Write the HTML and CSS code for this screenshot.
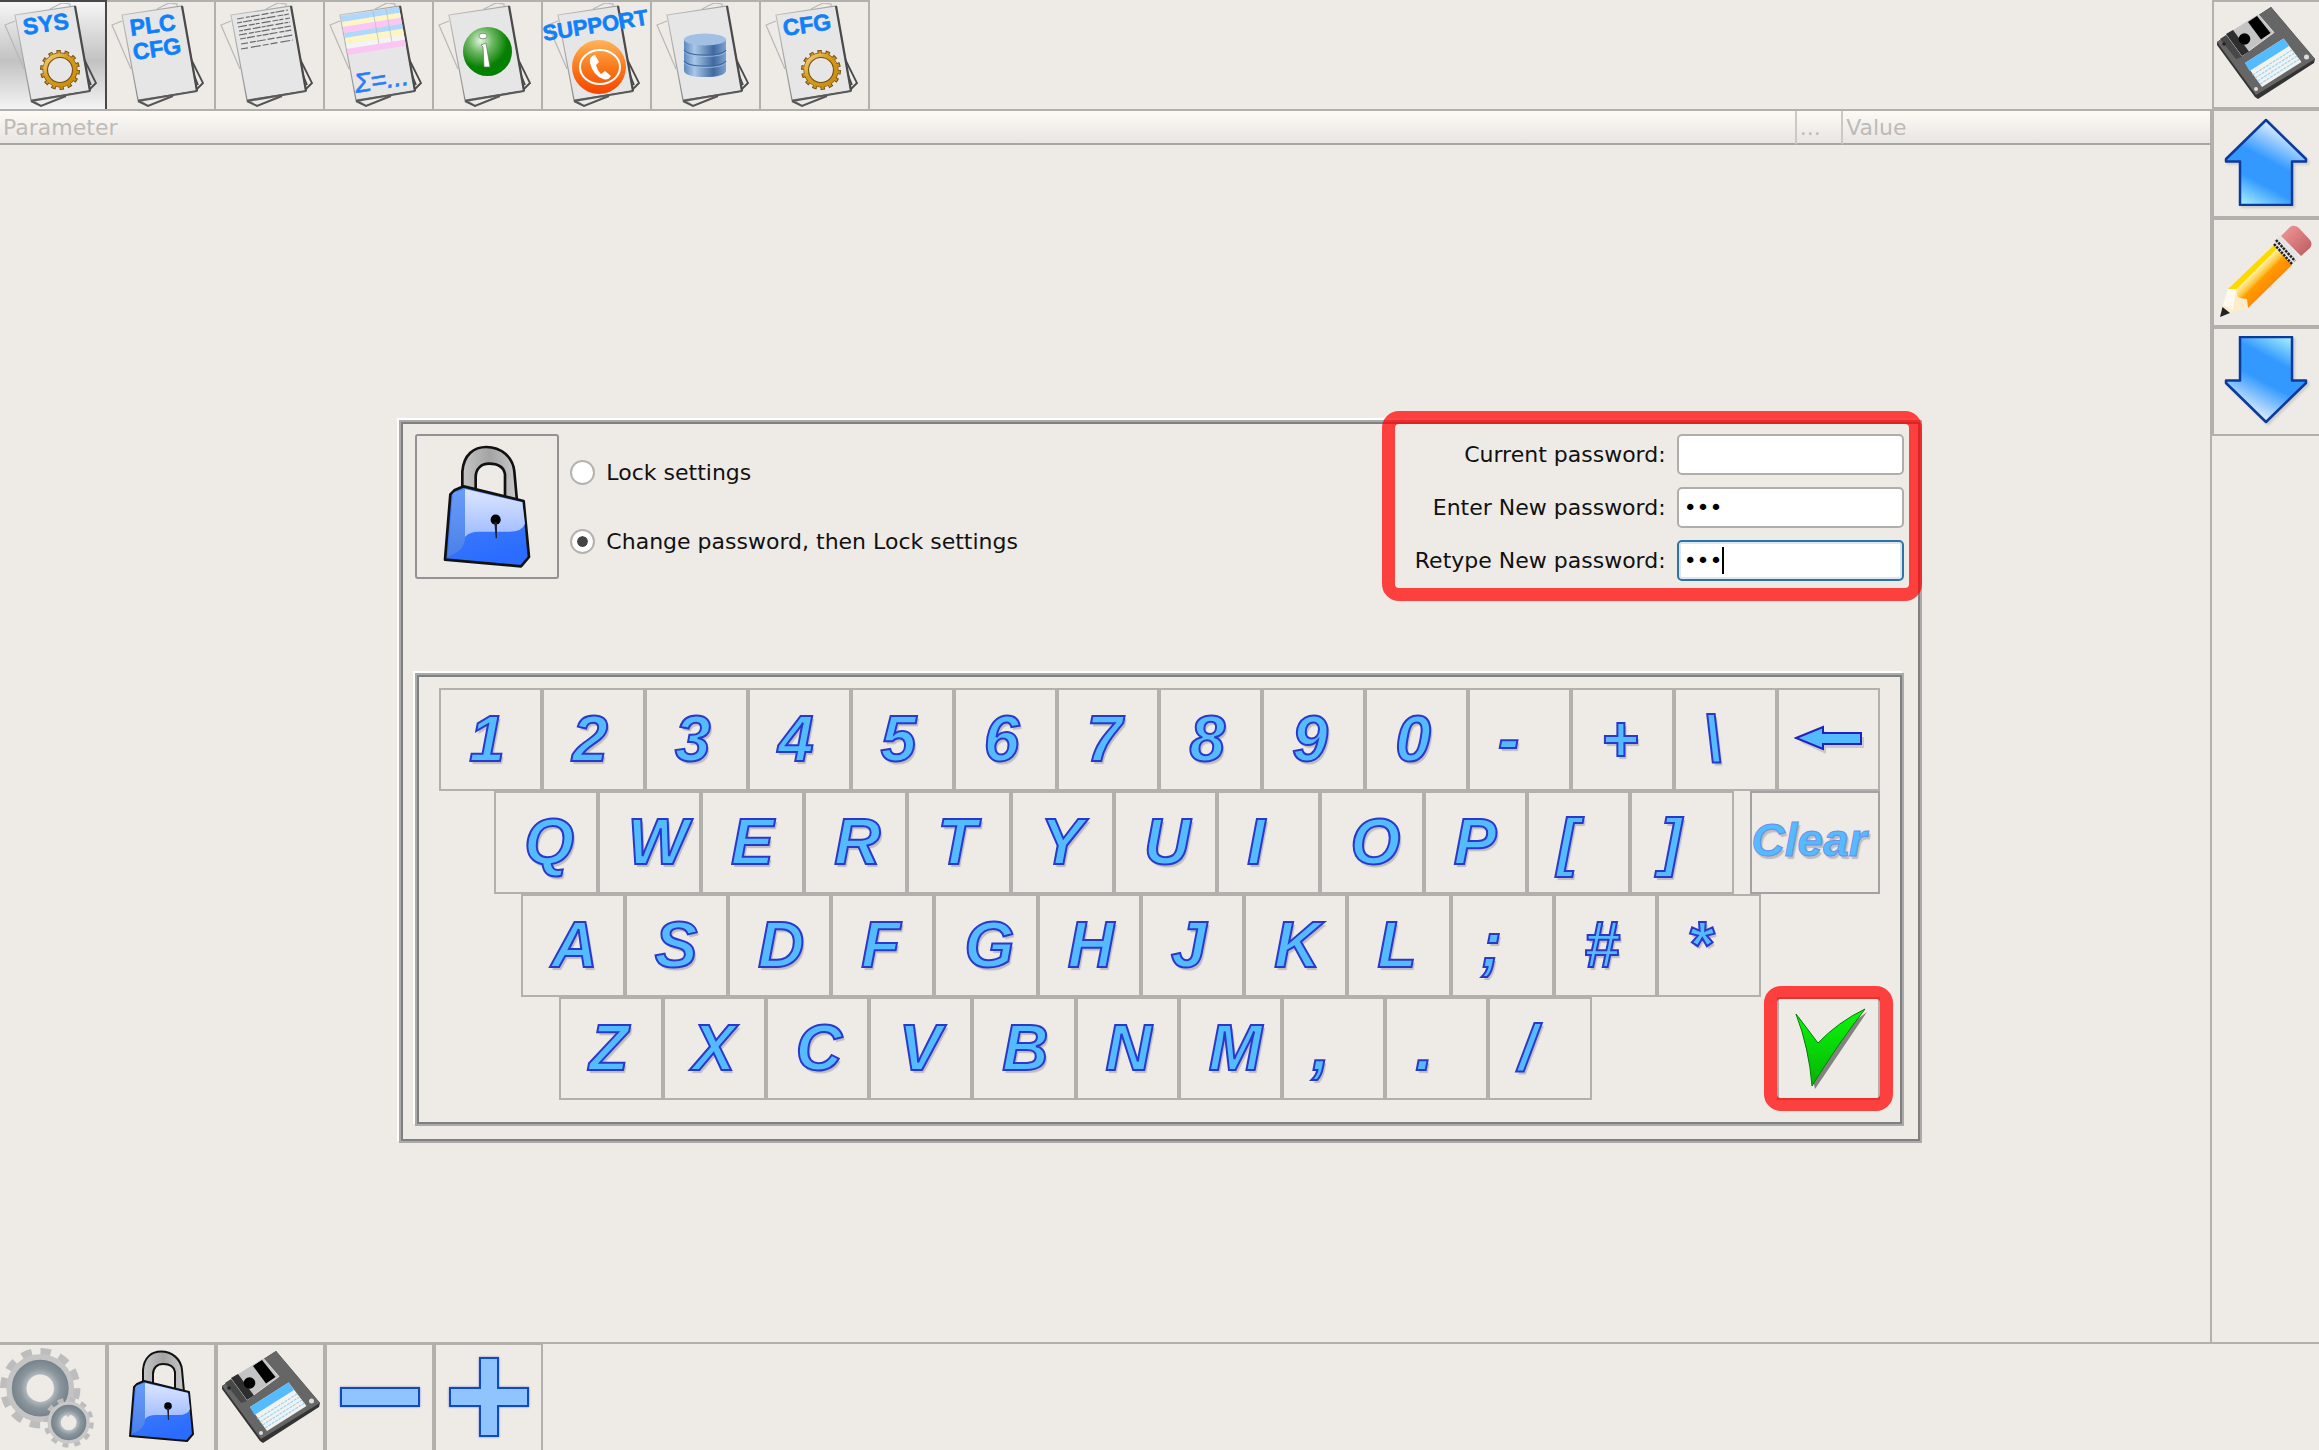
FILE: index.html
```html
<!DOCTYPE html>
<html lang="en">
<head>
    <meta charset="UTF-8">
    <meta name="viewport" content="width=device-width, initial-scale=1.0">
    <title>System settings</title>
    <link rel="stylesheet" href="styles.css">
</head>
<body>
    <!-- Shared icon parts -->
    <svg class="defs" aria-hidden="true">
        <defs>
            <linearGradient id="edge" x1="0" y1="0" x2="1" y2="1">
                <stop offset="0" stop-color="#c4c4c4"/><stop offset="0.5" stop-color="#999"/><stop offset="1" stop-color="#333"/>
            </linearGradient>
            <linearGradient id="gold" x1="0" y1="0" x2="1" y2="1">
                <stop offset="0" stop-color="#f2d28c"/><stop offset="0.4" stop-color="#d69b20"/><stop offset="1" stop-color="#c98c10"/>
            </linearGradient>
            <linearGradient id="arrow" x1="0.2" y1="1" x2="0.7" y2="0">
                <stop offset="0" stop-color="#a8f0ff"/><stop offset="0.3" stop-color="#3399ff"/><stop offset="0.55" stop-color="#3399ff"/><stop offset="0.95" stop-color="#eef6ff"/>
            </linearGradient>
            <radialGradient id="green" cx="0.36" cy="0.28" r="0.55">
                <stop offset="0" stop-color="#e4f4e2"/><stop offset="0.45" stop-color="#6db864"/><stop offset="1" stop-color="#068000"/>
            </radialGradient>
            <linearGradient id="orange" x1="0" y1="0" x2="0" y2="1">
                <stop offset="0" stop-color="#ffb45a"/><stop offset="0.5" stop-color="#fa7a1c"/><stop offset="1" stop-color="#f54400"/>
            </linearGradient>
            <linearGradient id="drum" x1="0" y1="0" x2="1" y2="0">
                <stop offset="0" stop-color="#5c87bd"/><stop offset="0.25" stop-color="#a9c7e8"/><stop offset="0.7" stop-color="#40699f"/><stop offset="1" stop-color="#7ea2d0"/>
            </linearGradient>
            <linearGradient id="shackle" x1="0" y1="0" x2="1" y2="0">
                <stop offset="0" stop-color="#c4c4c4"/><stop offset="0.5" stop-color="#a4a4a4"/><stop offset="1" stop-color="#c8c8c8"/>
            </linearGradient>
            <linearGradient id="body" x1="0" y1="0" x2="0.3" y2="1">
                <stop offset="0" stop-color="#4c86f4"/><stop offset="1" stop-color="#2a6cff"/>
            </linearGradient>
            <linearGradient id="shine" x1="0" y1="0" x2="0" y2="1">
                <stop offset="0" stop-color="#dce6ff"/><stop offset="1" stop-color="#a0bcff"/>
            </linearGradient>
            <linearGradient id="side" x1="0" y1="0" x2="0" y2="1">
                <stop offset="0" stop-color="#6a9cf8"/><stop offset="1" stop-color="#4a80e8"/>
            </linearGradient>
            <radialGradient id="steel" cx="0.5" cy="0.5" r="0.68">
                <stop offset="0.4" stop-color="#c0c6ca"/><stop offset="0.7" stop-color="#8a959c"/><stop offset="1" stop-color="#76828a"/>
            </radialGradient>
            <linearGradient id="yellow" gradientUnits="userSpaceOnUse" x1="32" y1="43" x2="51" y2="62">
                <stop offset="0" stop-color="#ffd800"/><stop offset="0.18" stop-color="#ffd800"/><stop offset="0.22" stop-color="#fff0a8"/><stop offset="0.5" stop-color="#ffc030"/><stop offset="0.6" stop-color="#ff9c00"/><stop offset="1" stop-color="#ff8a00"/>
            </linearGradient>
            <linearGradient id="rubber" x1="0" y1="0" x2="1" y2="1">
                <stop offset="0" stop-color="#f49a9a"/><stop offset="1" stop-color="#b85a60"/>
            </linearGradient>
            <linearGradient id="tick" x1="0" y1="0" x2="0" y2="1">
                <stop offset="0" stop-color="#0cf80c"/><stop offset="1" stop-color="#04b404"/>
            </linearGradient>
        </defs>

        <symbol id="pages" viewBox="0 2 107 105">
            <path d="M15 20 5 24 24 68M32 98 41 105 62 96M50 8 62 2 70 3V6" fill="none" stroke="#b8b8b8" stroke-width="1.200"/>
            <path d="M83 56 96 82 90 88M87 74 91 84" fill="none" stroke="#4a4a4a" stroke-width="1.800"/>
            <path d="M31 100 41 105 66 95" fill="none" stroke="#555" stroke-width="2"/>
            <path d="M15 14 75 5 90 90 31 99Z" fill="#e6e6e6" stroke="url(#edge)" stroke-width="1.200"/>
            <path d="M75 5 90 90" stroke="#4a4a4a" stroke-width="2.200"/>
            <path d="M90 90 31 100" stroke="#5a5a5a" stroke-width="2.200"/>
        </symbol>

        <symbol id="cog" viewBox="0 0 42 42">
            <circle cx="21" cy="21" r="17.5" fill="none" stroke="#75500c" stroke-width="5" stroke-dasharray="4.2 3.65"/>
            <circle cx="21" cy="21" r="14.7" fill="none" stroke="#75500c" stroke-width="5.6"/>
            <circle cx="21" cy="21" r="17" fill="none" stroke="#c98f1c" stroke-width="4" stroke-dasharray="2.6 5.03" stroke-dashoffset="-0.8"/>
            <circle cx="21" cy="21" r="14.9" fill="none" stroke="url(#gold)" stroke-width="3.8"/>
        </symbol>

        <symbol id="padlock" viewBox="0 0 67 93">
            <path d="M15 35V20C16 7 24 1.500 33 1.500C44 1.500 53 9 54 20L56 42 47 40V22C46 16 41 14 35 14C29 14 25 18 25 24V34Z" fill="url(#shackle)" stroke="#111" stroke-width="2"/>
            <path d="M9 34 16 31 61 42 65 84 59 91 2 86 6 37Z" fill="url(#body)" stroke="#111" stroke-width="2" stroke-linejoin="round"/>
            <path d="M8 36 17 33 17 70Q17 79 4 84Z" fill="url(#side)"/>
            <path d="M17 33 60 43 62 59Q60 65 50 65H28Q20 65 17 69Z" fill="url(#shine)"/>
            <circle cx="40" cy="56" r="3.800" fill="#000"/>
            <path d="M39 58H41L41 70H40Z" fill="#223"/>
        </symbol>

        <symbol id="floppy" viewBox="0 0 100 94">
            <path d="M1 36 55 1 99 53 98 57 42 93 39 91 1 39Z" fill="#333"/>
            <path d="M1 36 55 1 99 53 40 89Z" fill="#666"/>
            <path d="M10 28 42 8 58 26.500 26 50Z" fill="#c4c4c4" stroke="#eee" stroke-width="0.800"/>
            <path d="M10 28 17 24 33 45.500 26 50Z" fill="#2e2e2e"/>
            <path d="M4 33 10 29 26 51 20 53Z" fill="#484848"/>
            <path d="M32 16 41 10 54.500 27 45 33.500Z" fill="#000"/>
            <circle cx="28.500" cy="33" r="5.800" fill="#000"/>
            <path d="M29 57 67.600 32.500 85.500 56 46 81Z" fill="#f2f2ee"/>
            <path d="M29 57 67.600 32.500 73 40 33.500 65Z" fill="#55bbff"/>
            <path d="M36.500 69 76 44M39 72 78.500 47M41.500 75 81 50M44 78 83.500 53" stroke="#9ad4fa" stroke-width="1.200" stroke-dasharray="3 1"/>
            <circle cx="40" cy="83" r="2" fill="#ddd"/>
            <circle cx="90.500" cy="51" r="2.500" fill="#ddd"/>
            <circle cx="8" cy="38" r="1.800" fill="#222"/>
        </symbol>
    </svg>

    <div class="screen">
        <div class="workspace">
            <nav class="toolbar" aria-label="Sections">
                <button type="button" class="tool active" aria-label="System">
                    <svg viewBox="0 2 107 105">
                        <use href="#pages" x="0" y="2" width="107" height="105"/>
                        <text class="doc-text" x="24" y="34" transform="rotate(-8 24 34)">SYS</text>
                        <use href="#cog" x="39" y="48" width="42" height="42"/>
                    </svg>
                </button>
                <button type="button" class="tool" aria-label="PLC configuration">
                    <svg viewBox="0 2 107 105">
                        <use href="#pages" x="0" y="2" width="107" height="105"/>
                        <text class="doc-text" x="24" y="35" transform="rotate(-8 24 35)">PLC</text>
                        <text class="doc-text" x="27" y="59" transform="rotate(-8 27 59)">CFG</text>
                    </svg>
                </button>
                <button type="button" class="tool" aria-label="Log">
                    <svg viewBox="0 2 107 105">
                        <use href="#pages" x="0" y="2" width="107" height="105"/>
                        <g stroke="#6a6a6a" stroke-width="1.200" fill="none">
                            <path d="M21 18 72 9" stroke-dasharray="7 2 4 1 9 2"/>
                            <path d="M21 22 73 13" stroke-dasharray="5 1 9 2 6 1"/>
                            <path d="M22 26 74 17" stroke-dasharray="9 2 6 1 4 2"/>
                            <path d="M23 30 74 21" stroke-dasharray="4 1 7 2 8 1"/>
                            <path d="M23 34 75 25" stroke-dasharray="8 2 5 1 6 1"/>
                            <path d="M24 38 76 29" stroke-dasharray="6 1 8 2 5 1"/>
                            <path d="M25 43 77 34" stroke-dasharray="7 2 6 1 9 2"/>
                            <path d="M25 48 77 39" stroke-dasharray="7 3 10 2 6 2"/>
                        </g>
                    </svg>
                </button>
                <button type="button" class="tool" aria-label="Calculations">
                    <svg viewBox="0 2 107 105">
                        <use href="#pages" x="0" y="2" width="107" height="105"/>
                        <g transform="matrix(1 -0.16 0.18 1 16 15)">
                            <rect width="58" height="6" fill="#b0d8fb"/>
                            <rect y="6" width="58" height="5" fill="#fdf6c4"/>
                            <rect y="11" width="58" height="6" fill="#fcc6f4"/>
                            <rect y="17" width="58" height="5" fill="#b0d8fb"/>
                            <rect y="22" width="58" height="6" fill="#fdf6c4"/>
                            <rect y="28" width="58" height="5" fill="#f4f4f4"/>
                            <rect y="33" width="58" height="6" fill="#fcc6f4"/>
                            <path d="M32 0V33M45 0V33" stroke="#bbb" stroke-width="0.700"/>
                        </g>
                        <text class="sum-text" x="31" y="92" transform="rotate(-9 31 92)">Σ=...</text>
                    </svg>
                </button>
                <button type="button" class="tool" aria-label="Information">
                    <svg viewBox="0 2 107 105">
                        <use href="#pages" x="0" y="2" width="107" height="105"/>
                        <circle cx="53.500" cy="50.500" r="24.500" fill="url(#green)"/>
                        <ellipse cx="49" cy="35" rx="4" ry="2.800" fill="#fff" stroke="#5a7a58" stroke-width="0.700"/>
                        <path d="M47 44 52 42 56 66H50L49 46Z" fill="#fff" stroke="#5a7a58" stroke-width="0.700"/>
                    </svg>
                </button>
                <button type="button" class="tool" aria-label="Support">
                    <svg viewBox="0 2 107 105">
                        <use href="#pages" x="0" y="2" width="107" height="105"/>
                        <circle cx="56" cy="66" r="27" fill="url(#orange)"/>
                        <ellipse cx="57" cy="66" rx="20" ry="17" fill="none" stroke="#fff" stroke-width="2"/>
                        <path d="M52 54Q46 55 47 62Q50 74 60 78Q65 80 68 75L62 70 58 73Q54 69 53 64L56 61Z" fill="#fff"/>
                        <text class="doc-text wide" x="1" y="40" transform="rotate(-9 1 40)">SUPPORT</text>
                    </svg>
                </button>
                <button type="button" class="tool" aria-label="Database">
                    <svg viewBox="0 2 107 105">
                        <use href="#pages" x="0" y="2" width="107" height="105"/>
                        <path d="M32 38V70Q34 76 53 76Q72 76 74 70V38Z" fill="url(#drum)"/>
                        <path d="M32 49Q35 54 53 54Q71 54 74 49M32 60Q35 65 53 65Q71 65 74 60" fill="none" stroke="#3d66a0" stroke-width="1.200"/>
                        <path d="M32 50.500Q35 55.500 53 55.500Q71 55.500 74 50.500M32 61.500Q35 66.500 53 66.500Q71 66.500 74 61.500" fill="none" stroke="#9dbde2" stroke-width="0.800"/>
                        <ellipse cx="53" cy="38.500" rx="21" ry="6" fill="#a2c0e4"/>
                    </svg>
                </button>
                <button type="button" class="tool" aria-label="Configuration">
                    <svg viewBox="0 2 107 105">
                        <use href="#pages" x="0" y="2" width="107" height="105"/>
                        <text class="doc-text" x="23" y="35" transform="rotate(-8 23 35)">CFG</text>
                        <use href="#cog" x="39" y="48" width="42" height="42"/>
                    </svg>
                </button>
            </nav>

            <div class="parameters">
                <table class="param-table">
                    <thead>
                        <tr>
                            <th class="col-name">Parameter</th>
                            <th class="col-more">...</th>
                            <th>Value</th>
                        </tr>
                    </thead>
                </table>
            </div>
        </div>

        <nav class="side" aria-label="Edit">
            <button type="button" class="tool" aria-label="Save">
                <svg class="icon-floppy"><use href="#floppy"/></svg>
            </button>
            <button type="button" class="tool" aria-label="Up">
                <svg class="icon-arrow" viewBox="0 0 84 88">
                    <path d="M42 2 82 41V43.500H68V87H16V43.500H2V41Z" fill="url(#arrow)" stroke="#0a3a9c" stroke-width="2.500" stroke-linejoin="round"/>
                </svg>
            </button>
            <button type="button" class="tool" aria-label="Edit">
                <svg class="icon-pencil" viewBox="0 0 94 94">
                    <path d="M9 65 55 21 73 41 29 84 22 74 18 73Z" fill="url(#yellow)"/>
                    <path d="M9 65H17L19 74 28 75 29 84 11 89 3 83Z" fill="#fdeccb"/>
                    <path d="M9 65H17L14 86 4 81Z" fill="#fffaf0"/>
                    <path d="M1 93 3.500 83 11 89Z" fill="#222"/>
                    <path d="M54 17 61 12 81 33 74 40Z" fill="#e4e4e4"/>
                    <path d="M55 20 73 40M57 16 76 37" stroke="#222" stroke-width="2.500" stroke-dasharray="2.500 1"/>
                    <path d="M62 12 71 3Q75 0 80 4L91 16Q94 20 91 24L82 32Z" fill="url(#rubber)"/>
                </svg>
            </button>
            <button type="button" class="tool" aria-label="Down">
                <svg class="icon-arrow" viewBox="0 0 84 88">
                    <path d="M42 2 82 41V43.500H68V87H16V43.500H2V41Z" transform="rotate(180 42 44)" fill="url(#arrow)" stroke="#0a3a9c" stroke-width="2.500" stroke-linejoin="round"/>
                </svg>
            </button>
        </nav>
    </div>

    <nav class="bottom" aria-label="Actions">
        <button type="button" class="tool" aria-label="Settings">
            <svg viewBox="0 0 107 107">
                <circle cx="41" cy="45" r="37" fill="none" stroke="#bdbdbd" stroke-width="8" stroke-dasharray="10.500 8.870"/>
                <circle cx="41" cy="45" r="25" fill="none" stroke="#c4c4c4" stroke-width="19"/>
                <circle cx="41" cy="45" r="21.500" fill="none" stroke="url(#steel)" stroke-width="15"/>
                <circle cx="70" cy="80" r="23" fill="none" stroke="#bdbdbd" stroke-width="5" stroke-dasharray="6 6.040"/>
                <circle cx="70" cy="80" r="15" fill="none" stroke="#c8c8c8" stroke-width="13"/>
                <circle cx="70" cy="80" r="13" fill="none" stroke="url(#steel)" stroke-width="10"/>
            </svg>
        </button>
        <button type="button" class="tool" aria-label="Lock">
            <svg class="icon-lock"><use href="#padlock"/></svg>
        </button>
        <button type="button" class="tool" aria-label="Save">
            <svg class="icon-floppy"><use href="#floppy"/></svg>
        </button>
        <button type="button" class="tool" aria-label="Remove">
            <svg class="icon-sign" viewBox="0 0 82 82">
                <path d="M2 32H80V50H2Z" fill="#90c4ff" stroke="#0e4bc0" stroke-width="2"/>
            </svg>
        </button>
        <button type="button" class="tool" aria-label="Add">
            <svg class="icon-sign" viewBox="0 0 82 82">
                <path d="M32 2H50V32H80V50H50V80H32V50H2V32H32Z" fill="#90c4ff" stroke="#0e4bc0" stroke-width="2"/>
            </svg>
        </button>
    </nav>

    <!-- Password dialog -->
    <div class="overlay">
        <form class="dialog">
            <div class="dialog-top">
                <button type="button" class="lock-button" aria-label="Lock">
                    <svg class="icon-lock-big"><use href="#padlock"/></svg>
                </button>
                <div class="options">
                    <label><input type="radio" name="mode">Lock settings</label>
                    <label><input type="radio" name="mode" checked>Change password, then Lock settings</label>
                </div>
                <div class="passwords">
                    <label for="current">Current password:</label>
                    <input type="password" id="current">
                    <label for="new">Enter New password:</label>
                    <input type="password" id="new" value="123">
                    <label for="retype">Retype New password:</label>
                    <div class="field">
                        <input type="password" id="retype" class="focused" value="123">
                        <span class="caret"></span>
                    </div>
                    <span class="highlight highlight-form"></span>
                </div>
            </div>

            <div class="keyboard">
                <div class="row">
                    <button type="button" class="key">1</button>
                    <button type="button" class="key">2</button>
                    <button type="button" class="key">3</button>
                    <button type="button" class="key">4</button>
                    <button type="button" class="key">5</button>
                    <button type="button" class="key">6</button>
                    <button type="button" class="key">7</button>
                    <button type="button" class="key">8</button>
                    <button type="button" class="key">9</button>
                    <button type="button" class="key">0</button>
                    <button type="button" class="key">-</button>
                    <button type="button" class="key">+</button>
                    <button type="button" class="key">\</button>
                    <button type="button" class="key back" aria-label="Backspace">
                        <svg viewBox="0 0 72 30">
                            <path d="M4 15 30 4V10H68V21H30V27Z" fill="#aaa" opacity="0.500" transform="translate(2 2)"/>
                            <path d="M2 13 29 2V8H67V19H29V24Z" fill="#5bf" stroke="#2222c4" stroke-width="2"/>
                        </svg>
                    </button>
                </div>
                <div class="row row-q">
                    <button type="button" class="key">Q</button>
                    <button type="button" class="key">W</button>
                    <button type="button" class="key">E</button>
                    <button type="button" class="key">R</button>
                    <button type="button" class="key">T</button>
                    <button type="button" class="key">Y</button>
                    <button type="button" class="key">U</button>
                    <button type="button" class="key">I</button>
                    <button type="button" class="key">O</button>
                    <button type="button" class="key">P</button>
                    <button type="button" class="key">[</button>
                    <button type="button" class="key">]</button>
                    <button type="button" class="clear">Clear</button>
                </div>
                <div class="row row-a">
                    <button type="button" class="key">A</button>
                    <button type="button" class="key">S</button>
                    <button type="button" class="key">D</button>
                    <button type="button" class="key">F</button>
                    <button type="button" class="key">G</button>
                    <button type="button" class="key">H</button>
                    <button type="button" class="key">J</button>
                    <button type="button" class="key">K</button>
                    <button type="button" class="key">L</button>
                    <button type="button" class="key">;</button>
                    <button type="button" class="key">#</button>
                    <button type="button" class="key">*</button>
                </div>
                <div class="row row-z">
                    <button type="button" class="key">Z</button>
                    <button type="button" class="key">X</button>
                    <button type="button" class="key">C</button>
                    <button type="button" class="key">V</button>
                    <button type="button" class="key">B</button>
                    <button type="button" class="key">N</button>
                    <button type="button" class="key">M</button>
                    <button type="button" class="key">,</button>
                    <button type="button" class="key">.</button>
                    <button type="button" class="key">/</button>
                    <button type="submit" class="confirm" aria-label="Confirm">
                        <svg viewBox="0 0 74 82">
                            <path d="M4 8 24 38 72 3 20 80Z" fill="#555" opacity="0.700" transform="translate(1 1)"/>
                            <path d="M2 6Q12 19 24 35Q44 14 71 1Q44 36 18 78Q15 40 2 6Z" fill="url(#tick)" stroke="#0a7a0a" stroke-width="1"/>
                        </svg>
                        <span class="highlight highlight-confirm"></span>
                    </button>
                </div>
            </div>
        </form>
    </div>
</body>
</html>
```

FILE: styles.css
```css
* {
    box-sizing: border-box;
}
body {
    margin: 0;
    min-height: 100vh;
    display: flex;
    flex-direction: column;
    position: relative;
    background-color: #eeebe6;
    color: #111;
    font-family: "DejaVu Sans", sans-serif;
    font-size: 22px;
}
button {
    margin: 0;
    padding: 0;
    background: none;
    border: 2px solid #b2b0ad;
    border-radius: 0;
    font: inherit;
    overflow: hidden;
}
svg {
    display: block;
}
.defs {
    position: absolute;
    width: 0;
    height: 0;
}

/* Main area */
.screen {
    flex: 1;
    display: flex;
}
.workspace {
    flex: 1;
    display: flex;
    flex-direction: column;
}
.tool {
    display: flex;
    align-items: center;
    justify-content: center;
}
.toolbar {
    display: grid;
    grid-template-columns: 107px repeat(7, 109px);
    height: 109px;
}
.toolbar .tool {
    justify-content: flex-start;
    border-left: 0;
    border-bottom: 0;
}
.toolbar .tool svg {
    width: 107px;
    height: 105px;
    flex: none;
}
.toolbar .active {
    background: linear-gradient(#f6f6f6, #c2c2c2 55%, #f4f4f4);
    border-color: #484848;
}
.doc-text {
    font: bold 23px "Liberation Sans", Arial, sans-serif;
    fill: #0f80f8;
    stroke: #0f80f8;
    stroke-width: 0.6px;
}
.doc-text.wide {
    font-size: 22px;
}
.sum-text {
    font: italic 27px "Liberation Sans", Arial, sans-serif;
    fill: #2a7cfa;
    stroke: #2a7cfa;
    stroke-width: 0.6px;
}
.parameters {
    flex: 1;
    border-top: 2px solid #b2b0ad;
    border-right: 2px solid #b2b0ad;
}
.param-table {
    width: 100%;
    table-layout: fixed;
    border-collapse: separate;
    border-spacing: 0;
}
.param-table th {
    height: 34px;
    padding: 2px 3px 0;
    background: linear-gradient(#fdfaf6, #e8e6e2);
    border-bottom: 2px solid #a8a6a3;
    border-right: 2px solid #cbc9c6;
    color: #bdbbb8;
    font-weight: normal;
    line-height: 30px;
    text-align: left;
}
.param-table th:last-child {
    border-right: 0;
}
.col-name {
    width: 81.3%;
}
.col-more {
    width: 2.1%;
}
.side {
    width: 107px;
    display: flex;
    flex-direction: column;
}
.side .tool {
    height: 109px;
    padding: 0 2px 3px 0;
    border-right: 0;
}

/* Bottom bar */
.bottom {
    display: grid;
    grid-template-columns: 107px repeat(4, 109px);
    height: 108px;
    border-top: 2px solid #b2b0ad;
}
.bottom .tool {
    padding-bottom: 2px;
    border-top-width: 1px;
    border-bottom: 0;
}
.bottom .tool:first-child {
    border-left: 0;
}
.icon-floppy {
    width: 100px;
    height: 94px;
}
.icon-arrow {
    width: 84px;
    height: 88px;
    filter: drop-shadow(2px 2px 1px #ccc);
}
.icon-pencil {
    width: 94px;
    height: 94px;
}
.icon-lock {
    width: 67px;
    height: 93px;
}
.icon-sign {
    width: 82px;
    height: 82px;
    filter: drop-shadow(0 0 1px #88c);
}
.icon-lock-big {
    width: 90px;
    height: 124px;
}

/* Dialog */
.overlay {
    position: absolute;
    inset: 0;
    padding: 420px 0 0 2px;
}
.dialog,
.keyboard {
    border: 2px solid #aaa;
    box-shadow: -2px -2px 0 #fff, inset 0 0 0 2px #808080;
}
.dialog {
    width: 65.7%;
    margin: 0 auto;
    padding: 12px 16px 15px 14px;
    background-color: #eeebe6;
}
.dialog-top {
    display: flex;
    align-items: flex-start;
    margin-bottom: 92px;
}
.lock-button {
    width: 144px;
    height: 145px;
    display: flex;
    align-items: center;
    justify-content: center;
    border-color: #939393;
    border-radius: 3px;
}
.options {
    flex: 1;
    display: flex;
    flex-direction: column;
    gap: 40px;
    padding: 24px 0 0 11px;
}
.options label {
    display: flex;
    align-items: center;
    gap: 11px;
    line-height: 29px;
}
.options input {
    appearance: none;
    width: 25px;
    height: 25px;
    margin: 0;
    padding: 5px;
    background-color: #fff;
    border: 2px solid #b4b2af;
    border-radius: 50%;
}
.options input:checked {
    background: #444 content-box;
    box-shadow: inset 0 0 0 5px #fff;
}
.passwords {
    position: relative;
    display: grid;
    grid-template-columns: auto 227px;
    align-items: center;
    gap: 12px 11px;
    text-align: right;
}
.passwords input {
    display: block;
    width: 100%;
    height: 41px;
    padding: 0 5px;
    background-color: #fff;
    border: 2px solid #b0aeab;
    border-radius: 5px;
    font: inherit;
    color: #000;
}
.passwords .focused {
    border-color: #2a74a8;
    box-shadow: inset 0 0 0 2px #dfe6f0;
}
.field {
    position: relative;
}
.caret {
    position: absolute;
    left: 45px;
    top: 7px;
    width: 2px;
    height: 27px;
    background-color: #000;
}
.highlight {
    position: absolute;
    border: 13px solid rgba(255, 0, 0, 0.73);
    border-radius: 17px;
    pointer-events: none;
}
.highlight-form {
    inset: -23px -18px -20px -33px;
}

/* On-screen keyboard */
.keyboard {
    padding: 13px 22px 24px 22px;
}
.row {
    display: flex;
}
.row-q {
    padding-left: 55px;
}
.row-a {
    padding: 0 119px 0 82px;
}
.row-z {
    padding-left: 120px;
}
.key {
    flex: 1 1 0;
    min-width: 0;
    height: 103px;
    padding-left: 28px;
    text-align: left;
}
.key,
.clear {
    color: #5bf;
    font: italic bold 64px/99px "Liberation Sans", Arial, sans-serif;
    -webkit-text-stroke: 2px #2a38cc;
    text-shadow: 2px 3px 1px rgba(0, 0, 40, 0.2);
}
.back {
    padding: 0 13px 0 15px;
}
.back svg {
    width: 72px;
    height: 30px;
}
.clear {
    width: 130px;
    margin-left: 16px;
    padding-bottom: 4px;
    border-color: #a2a2a2;
    font-size: 46px;
    line-height: 95px;
    text-align: left;
    -webkit-text-stroke: 1px #6a90e8;
}
.confirm {
    position: relative;
    display: flex;
    align-items: center;
    justify-content: center;
    width: 103px;
    margin-left: 185px;
    padding-left: 6px;
    overflow: visible;
}
.confirm svg {
    width: 74px;
    height: 82px;
}
.highlight-confirm {
    inset: -13px -15px;
}
```
